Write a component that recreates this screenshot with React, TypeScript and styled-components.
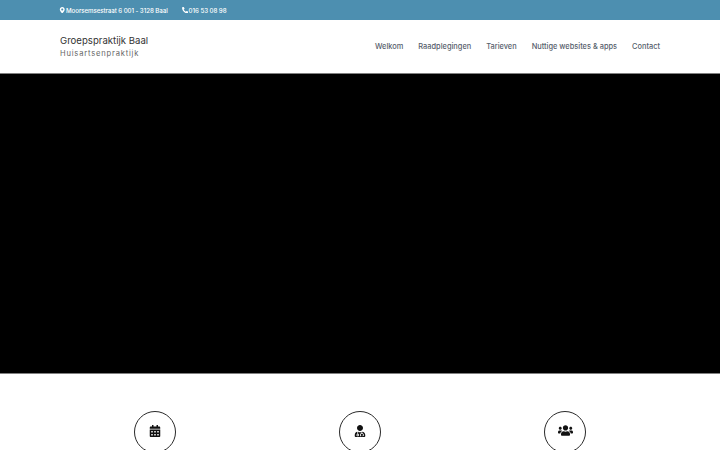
import styled, { createGlobalStyle } from 'styled-components';
import {
  FaCalendarAlt,
  FaMapMarkerAlt,
  FaPhoneAlt,
  FaUserMd,
  FaUsers,
} from 'react-icons/fa';

const GlobalStyle = createGlobalStyle`
  html, body {
    margin: 0;
    padding: 0;
    height: 450px;
    overflow: hidden;
    background: #fff;
    font-family: Inter, "Liberation Sans", sans-serif;
  }
`;

const TopBar = styled.div`
  height: 20px;
  background: #4d8fb0;
  color: #fff;
`;

const Container = styled.div`
  width: 600px;
  margin: 0 auto;
`;

const TopInner = styled(Container)`
  height: 20px;
  display: flex;
  align-items: center;
  gap: 15px;
  font-size: 6.2px;
  font-weight: 500;
  letter-spacing: -0.08px;
`;

const TopItem = styled.span`
  display: flex;
  align-items: center;
  gap: 0.5px;
  svg {
    font-size: 6.5px;
    margin-left: -1px;
  }
`;

const Header = styled.header`
  height: 53px;
  background: #fff;
`;

const HeaderInner = styled(Container)`
  height: 53px;
  display: flex;
  align-items: center;
  justify-content: space-between;
`;

const Brand = styled.div`
  display: flex;
  flex-direction: column;
  gap: 2px;
  padding-top: 1px;
`;

const BrandName = styled.div`
  font-size: 9.6px;
  line-height: 12px;
  color: #333;
`;

const BrandSub = styled.div`
  font-size: 7.6px;
  line-height: 10px;
  color: #666;
  letter-spacing: 0.8px;
`;

const Nav = styled.nav`
  display: flex;
  gap: 15px;
`;

const NavLink = styled.a`
  font-size: 7.42px;
  font-weight: 500;
  color: #56606c;
  white-space: nowrap;
`;

const Hero = styled.div`
  height: 301px;
  box-sizing: border-box;
  border-top: 1px solid #808080;
  border-bottom: 1px solid #808080;
  background: #000;
`;

const Features = styled(Container)`
  display: grid;
  grid-template-columns: repeat(3, 190px);
  gap: 15px;
  padding-top: 37px;
`;

const Feature = styled.div`
  display: flex;
  justify-content: center;
`;

const Circle = styled.div`
  width: 42px;
  height: 42px;
  box-sizing: border-box;
  padding-bottom: 3px;
  border: 1.5px solid #2a2a2a;
  border-radius: 50%;
  display: flex;
  align-items: center;
  justify-content: center;
  color: #111;
  font-size: 12px;
`;

const links = ['Welkom', 'Raadplegingen', 'Tarieven', 'Nuttige websites & apps', 'Contact'];

export default function App() {
  return (
    <>
      <GlobalStyle />
      <TopBar>
        <TopInner>
          <TopItem>
            <FaMapMarkerAlt />
            Moorsemsestraat 6 001 - 3128 Baal
          </TopItem>
          <TopItem>
            <FaPhoneAlt />
            016 53 08 98
          </TopItem>
        </TopInner>
      </TopBar>
      <Header>
        <HeaderInner>
          <Brand>
            <BrandName>Groepspraktijk Baal</BrandName>
            <BrandSub>Huisartsenpraktijk</BrandSub>
          </Brand>
          <Nav>
            {links.map((link) => (
              <NavLink key={link}>{link}</NavLink>
            ))}
          </Nav>
        </HeaderInner>
      </Header>
      <Hero />
      <Features>
        <Feature>
          <Circle>
            <FaCalendarAlt />
          </Circle>
        </Feature>
        <Feature>
          <Circle>
            <FaUserMd />
          </Circle>
        </Feature>
        <Feature>
          <Circle>
            <FaUsers size={15} />
          </Circle>
        </Feature>
      </Features>
    </>
  );
}
